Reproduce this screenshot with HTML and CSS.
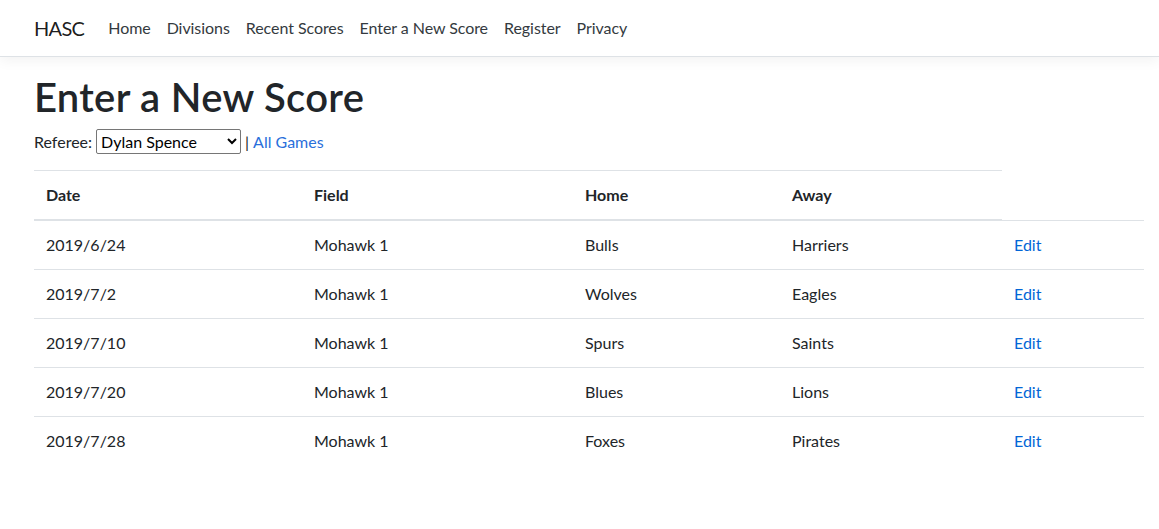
FILE: index.html
```html
<!DOCTYPE html>
<html lang="en">
<head>
<meta charset="utf-8">
<title>Enter a New Score - HASC</title>
<link rel="stylesheet" href="styles.css">
</head>
<body>
<header class="navbar">
  <a class="brand" href="#">HASC</a>
  <nav class="nav">
    <a class="nav-link" href="#">Home</a>
    <a class="nav-link" href="#">Divisions</a>
    <a class="nav-link" href="#">Recent Scores</a>
    <a class="nav-link" href="#">Enter a New Score</a>
    <a class="nav-link" href="#">Register</a>
    <a class="nav-link" href="#">Privacy</a>
  </nav>
</header>
<main class="main">
  <h1 class="title">Enter a New Score</h1>
  <div class="filter">
    <label class="filter-label" for="ref">Referee:</label>
    <select id="ref" class="ref-select">
      <option>Dylan Spence</option>
    </select>
    <span class="sep">|</span>
    <a class="link-all" href="#">All Games</a>
  </div>
  <table class="table">
    <colgroup>
      <col class="c-date">
      <col class="c-field">
      <col class="c-home">
      <col class="c-away">
      <col class="c-edit">
    </colgroup>
    <thead>
      <tr><th>Date</th><th>Field</th><th>Home</th><th>Away</th></tr>
    </thead>
    <tbody>
      <tr><td>2019/6/24</td><td>Mohawk 1</td><td>Bulls</td><td>Harriers</td><td><a class="edit" href="#">Edit</a></td></tr>
      <tr><td>2019/7/2</td><td>Mohawk 1</td><td>Wolves</td><td>Eagles</td><td><a class="edit" href="#">Edit</a></td></tr>
      <tr><td>2019/7/10</td><td>Mohawk 1</td><td>Spurs</td><td>Saints</td><td><a class="edit" href="#">Edit</a></td></tr>
      <tr><td>2019/7/20</td><td>Mohawk 1</td><td>Blues</td><td>Lions</td><td><a class="edit" href="#">Edit</a></td></tr>
      <tr><td>2019/7/28</td><td>Mohawk 1</td><td>Foxes</td><td>Pirates</td><td><a class="edit" href="#">Edit</a></td></tr>
    </tbody>
  </table>
</main>
</body>
</html>
```

FILE: styles.css
```css
* { box-sizing: border-box; }
html, body { margin: 0; padding: 0; }
body {
  font-family: "Segoe UI", Lato, "Noto Sans", "Liberation Sans", sans-serif;
  font-size: 16px;
  line-height: 1.5;
  color: #212529;
  background: #fff;
}
a { text-decoration: none; }

.navbar {
  display: flex;
  align-items: center;
  height: 57px;
  padding: 0 34px;
  background: #fff;
  border-bottom: 1px solid #dee2e6;
  box-shadow: 0 4px 12px rgba(0, 0, 0, 0.05);
}
.brand {
  font-size: 20px;
  line-height: 30px;
  letter-spacing: -0.7px;
  color: rgba(0, 0, 0, 0.9);
  margin-right: 16px;
}
.nav { display: flex; }
.nav-link {
  padding: 8px;
  letter-spacing: -0.06px;
  color: #343a40;
}

.main { padding: 16px 15px 0 34px; }
.title {
  font-size: 40px;
  font-weight: 600;
  line-height: 1.2;
  letter-spacing: 0.3px;
  margin: 0 0 8px;
}
.filter {
  display: flex;
  align-items: center;
  gap: 4px;
  height: 25px;
  margin-bottom: 16px;
}
.ref-select {
  font-family: inherit;
  font-size: 16px;
  width: 145px;
  height: 25px;
  color: #000;
  background: #fff;
  border: 1px solid #767676;
  border-radius: 2px;
}
.sep { color: #212529; }
.link-all { color: #2a6fdb; }

.table {
  width: 100%;
  border-collapse: collapse;
  color: #212529;
}
.c-date { width: 268px; }
.c-field { width: 271px; }
.c-home { width: 207px; }
.c-away { width: 222px; }
.c-edit { width: 142px; }
.table th, .table td {
  padding: 12px;
  text-align: left;
  vertical-align: top;
  border-top: 1px solid #dee2e6;
}
.table th {
  font-weight: 700;
  vertical-align: bottom;
  border-bottom: 2px solid #dee2e6;
}
.edit { color: #0366d6; }
```
